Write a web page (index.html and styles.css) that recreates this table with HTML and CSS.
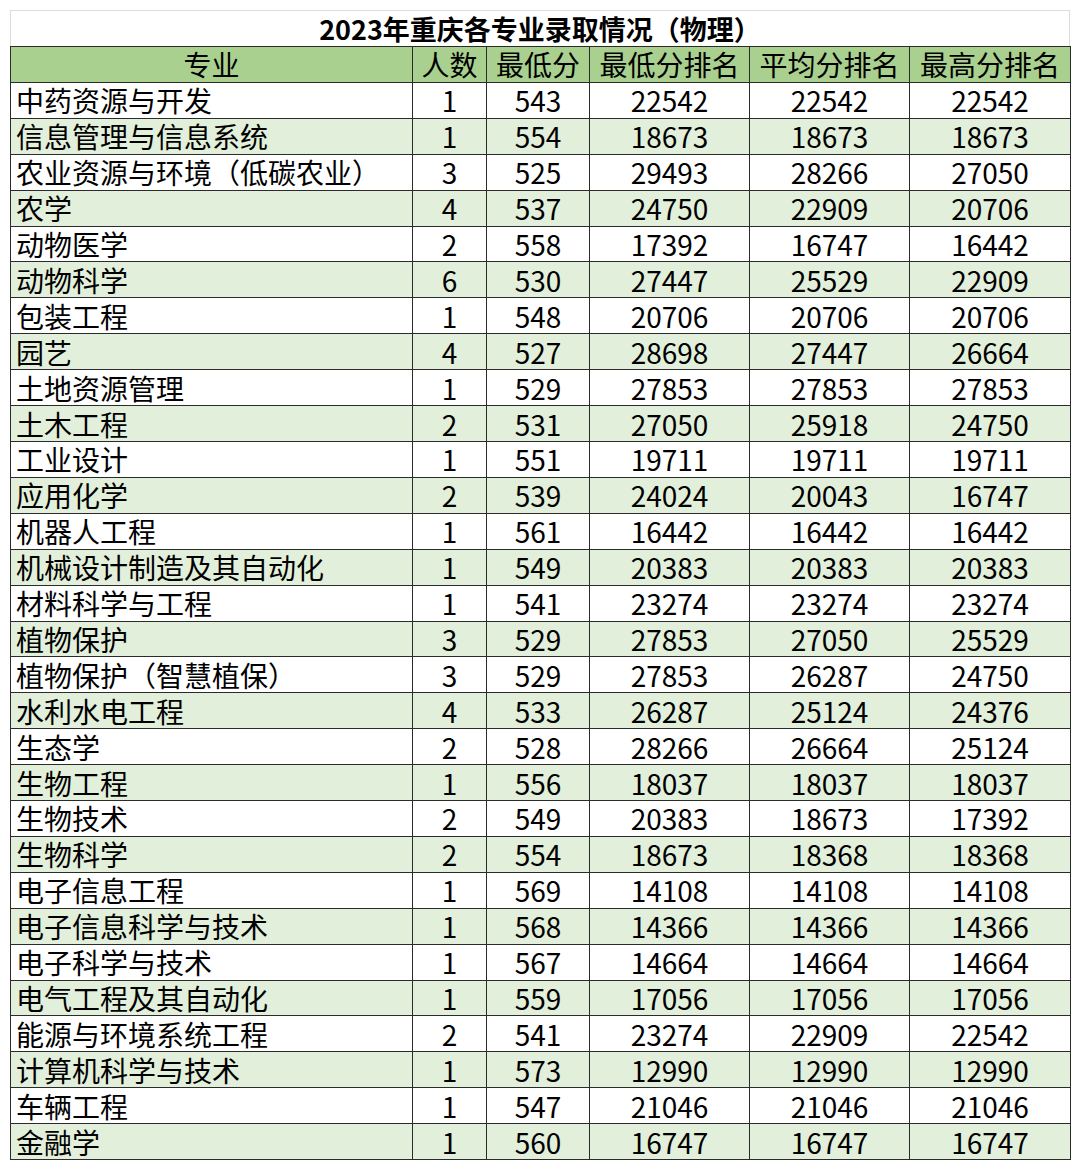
FILE: index.html
```html
<!DOCTYPE html>
<html lang="zh-CN">
<head>
<meta charset="utf-8">
<title>2023年重庆各专业录取情况（物理）</title>
<link rel="stylesheet" href="styles.css">
</head>
<body>
<div class="sheet">
  <div class="title">2023年重庆各专业录取情况（物理）</div>
  <table class="grid">
    <colgroup>
      <col class="c-name"><col class="c-num"><col class="c-score"><col class="c-rank"><col class="c-rank"><col class="c-rank2">
    </colgroup>
    <thead>
      <tr><th>专业</th><th>人数</th><th>最低分</th><th>最低分排名</th><th>平均分排名</th><th>最高分排名</th></tr>
    </thead>
    <tbody>
      <tr><td>中药资源与开发</td><td>1</td><td>543</td><td>22542</td><td>22542</td><td>22542</td></tr>
      <tr><td>信息管理与信息系统</td><td>1</td><td>554</td><td>18673</td><td>18673</td><td>18673</td></tr>
      <tr><td>农业资源与环境（低碳农业）</td><td>3</td><td>525</td><td>29493</td><td>28266</td><td>27050</td></tr>
      <tr><td>农学</td><td>4</td><td>537</td><td>24750</td><td>22909</td><td>20706</td></tr>
      <tr><td>动物医学</td><td>2</td><td>558</td><td>17392</td><td>16747</td><td>16442</td></tr>
      <tr><td>动物科学</td><td>6</td><td>530</td><td>27447</td><td>25529</td><td>22909</td></tr>
      <tr><td>包装工程</td><td>1</td><td>548</td><td>20706</td><td>20706</td><td>20706</td></tr>
      <tr><td>园艺</td><td>4</td><td>527</td><td>28698</td><td>27447</td><td>26664</td></tr>
      <tr><td>土地资源管理</td><td>1</td><td>529</td><td>27853</td><td>27853</td><td>27853</td></tr>
      <tr><td>土木工程</td><td>2</td><td>531</td><td>27050</td><td>25918</td><td>24750</td></tr>
      <tr><td>工业设计</td><td>1</td><td>551</td><td>19711</td><td>19711</td><td>19711</td></tr>
      <tr><td>应用化学</td><td>2</td><td>539</td><td>24024</td><td>20043</td><td>16747</td></tr>
      <tr><td>机器人工程</td><td>1</td><td>561</td><td>16442</td><td>16442</td><td>16442</td></tr>
      <tr><td>机械设计制造及其自动化</td><td>1</td><td>549</td><td>20383</td><td>20383</td><td>20383</td></tr>
      <tr><td>材料科学与工程</td><td>1</td><td>541</td><td>23274</td><td>23274</td><td>23274</td></tr>
      <tr><td>植物保护</td><td>3</td><td>529</td><td>27853</td><td>27050</td><td>25529</td></tr>
      <tr><td>植物保护（智慧植保）</td><td>3</td><td>529</td><td>27853</td><td>26287</td><td>24750</td></tr>
      <tr><td>水利水电工程</td><td>4</td><td>533</td><td>26287</td><td>25124</td><td>24376</td></tr>
      <tr><td>生态学</td><td>2</td><td>528</td><td>28266</td><td>26664</td><td>25124</td></tr>
      <tr><td>生物工程</td><td>1</td><td>556</td><td>18037</td><td>18037</td><td>18037</td></tr>
      <tr><td>生物技术</td><td>2</td><td>549</td><td>20383</td><td>18673</td><td>17392</td></tr>
      <tr><td>生物科学</td><td>2</td><td>554</td><td>18673</td><td>18368</td><td>18368</td></tr>
      <tr><td>电子信息工程</td><td>1</td><td>569</td><td>14108</td><td>14108</td><td>14108</td></tr>
      <tr><td>电子信息科学与技术</td><td>1</td><td>568</td><td>14366</td><td>14366</td><td>14366</td></tr>
      <tr><td>电子科学与技术</td><td>1</td><td>567</td><td>14664</td><td>14664</td><td>14664</td></tr>
      <tr><td>电气工程及其自动化</td><td>1</td><td>559</td><td>17056</td><td>17056</td><td>17056</td></tr>
      <tr><td>能源与环境系统工程</td><td>2</td><td>541</td><td>23274</td><td>22909</td><td>22542</td></tr>
      <tr><td>计算机科学与技术</td><td>1</td><td>573</td><td>12990</td><td>12990</td><td>12990</td></tr>
      <tr><td>车辆工程</td><td>1</td><td>547</td><td>21046</td><td>21046</td><td>21046</td></tr>
      <tr><td>金融学</td><td>1</td><td>560</td><td>16747</td><td>16747</td><td>16747</td></tr>
    </tbody>
  </table>
</div>
</body>
</html>
```

FILE: styles.css
```css
html, body {
  margin: 0;
  padding: 0;
  background: #ffffff;
}

body {
  font-family: "Noto Sans CJK SC", "Noto Sans", sans-serif;
  color: #000000;
}

.sheet {
  width: 1060px;
  margin: 10px 0 0 10px;
}

.title {
  box-sizing: border-box;
  height: 36px;
  border: 1px solid #dcdcdc;
  border-bottom: none;
  font-size: 27px;
  font-weight: 700;
  line-height: 35px;
  text-align: center;
}

.grid {
  width: 1060px;
  table-layout: fixed;
  border-collapse: collapse;
  font-size: 28px;
}

.c-name { width: 402px; }
.c-num { width: 74px; }
.c-score { width: 103px; }
.c-rank { width: 160px; }
.c-rank2 { width: 161px; }

.grid tr {
  height: 35.92px;
}

.grid th,
.grid td {
  border: 1px solid #2b2b2b;
  padding: 0;
  line-height: 1;
  vertical-align: middle;
  text-align: center;
  font-weight: 400;
  white-space: nowrap;
}

.grid thead th {
  background: #a9d08e;
}

.grid tbody td:first-child {
  text-align: left;
  padding-left: 5px;
}

.grid tbody tr:nth-child(even) td {
  background: #e2efda;
}
```
